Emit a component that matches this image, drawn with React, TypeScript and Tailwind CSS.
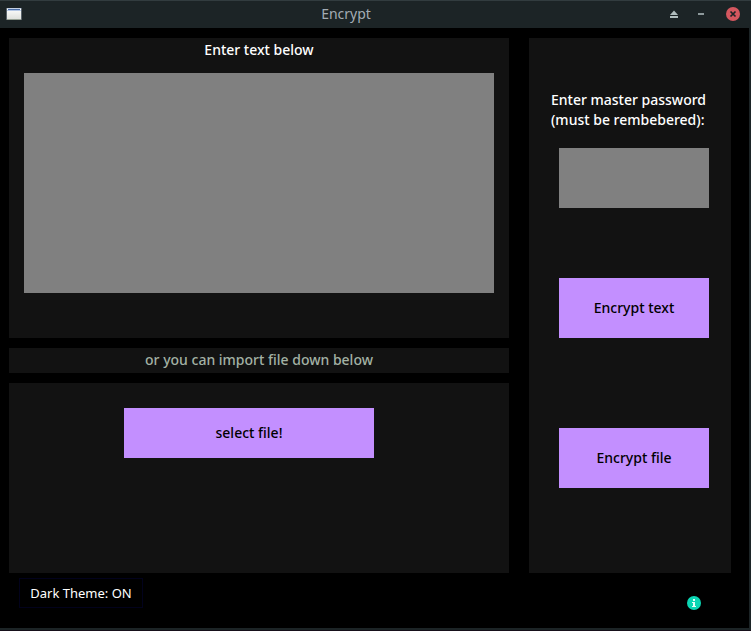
import { ButtonHTMLAttributes } from "react";

function TitleBar() {
  return (
    <header className="flex h-7 items-center border-t border-[#323c3f] bg-[#1c2426] pb-0.5 pl-1.5 pr-[11px]">
      <svg width="16" height="14" viewBox="0 0 16 14" shapeRendering="crispEdges" aria-hidden="true">
        <defs>
          <linearGradient id="pane" x1="0" y1="0" x2="0" y2="1">
            <stop offset="0" stopColor="#ffffff" />
            <stop offset="1" stopColor="#dcdeda" />
          </linearGradient>
        </defs>
        <rect x="0" y="1" width="16" height="12" fill="#59636a" />
        <rect x="1" y="1" width="14" height="12" fill="url(#pane)" />
        <rect x="1" y="1" width="14" height="1" fill="#c3d0e4" />
        <rect x="2" y="2" width="12" height="1" fill="#4a6da7" />
        <rect x="1" y="3" width="14" height="1" fill="#b5c8e6" />
        <rect x="1" y="12" width="14" height="1" fill="#96a094" />
      </svg>
      <h1 className="grow text-center text-sm text-[#a3acb4]">Encrypt</h1>
      <div className="flex items-center justify-end">
        <button type="button" aria-label="Shade" className="mr-5">
          <svg width="8" height="8" viewBox="0 0 8 8" className="block" fill="#b0bdbd">
            <path d="M4 0.5 8 5H0Z" />
            <path d="M0 6h8v2H0Z" />
          </svg>
        </button>
        <button type="button" aria-label="Minimize" className="mr-[22px]">
          <svg width="6" height="8" viewBox="0 0 6 8" className="block" fill="#8d999b">
            <path d="M0 3h6v2H0Z" />
          </svg>
        </button>
        <button type="button" aria-label="Close">
          <svg width="14" height="14" viewBox="0 0 14 14" className="block">
            <circle cx="7" cy="7" r="7" fill="#d4575f" />
            <path d="m4.5 4.5 5 5m0-5-5 5" stroke="#1c2426" strokeWidth="1.7" />
          </svg>
        </button>
      </div>
    </header>
  );
}

function ActionButton({ className = "", ...props }: ButtonHTMLAttributes<HTMLButtonElement>) {
  return (
    <button
      type="button"
      className={`bg-[#c38fff] text-sm font-medium text-black ${className}`}
      {...props}
    />
  );
}

export default function App() {
  return (
    <div className="flex min-h-screen flex-col bg-[#160f1a] pb-px font-['Noto_Sans',sans-serif]">
      <TitleBar />
      <div className="flex grow flex-col border-r-2 border-b-2 border-[#1c2426] bg-black pt-2.5 pr-[18px] pl-[9px]">
        <main className="flex gap-5">
          <div className="flex grow flex-col gap-2.5">
            <section className="h-[300px] bg-[#121212] px-[15px] pt-0.5">
              <label htmlFor="message" className="block text-center text-sm font-medium text-white">
                Enter text below
              </label>
              <textarea
                id="message"
                className="mt-[13px] block h-[220px] w-full resize-none bg-[#808080] p-1 text-sm text-black outline-none"
              />
            </section>
            <p className="h-[25px] bg-[#121212] pt-0.5 text-center text-sm font-medium text-[#a3b1a4]">
              or you can import file down below
            </p>
            <section className="h-[190px] bg-[#121212] px-[115px] pt-[25px]">
              <ActionButton className="h-[50px] w-[250px]">select file!</ActionButton>
            </section>
          </div>
          <aside className="flex w-[202px] shrink-0 flex-col bg-[#121212] px-[22px] pt-[52px]">
            <label htmlFor="password" className="text-sm font-medium whitespace-nowrap text-white">
              Enter master password
              <br />
              (must be rembebered):
            </label>
            <div className="ml-2 flex w-[150px] flex-col">
              <input
                id="password"
                type="password"
                className="mt-[18px] h-[60px] bg-[#808080] px-1 text-sm text-black outline-none"
              />
              <ActionButton className="mt-[70px] h-[60px]">Encrypt text</ActionButton>
              <ActionButton className="mt-[90px] h-[60px]">Encrypt file</ActionButton>
            </div>
          </aside>
        </main>
        <footer className="flex items-start justify-between pt-[5px] pr-[30px] pl-2.5">
          <button
            type="button"
            className="h-[30px] w-[124px] border border-[#02021c] pt-0.5 text-[13px] text-white"
          >
            Dark Theme: ON
          </button>
          <button type="button" aria-label="Information" className="mt-[18px]">
            <svg width="14" height="14" viewBox="0 0 14 14" className="block">
              <circle cx="7" cy="7" r="7" fill="#0bd6b4" />
              <path d="M6 3h2v2H6ZM5 6h3v4h1v1H5v-1h1V7H5Z" fill="#e4fff8" />
            </svg>
          </button>
        </footer>
      </div>
    </div>
  );
}
